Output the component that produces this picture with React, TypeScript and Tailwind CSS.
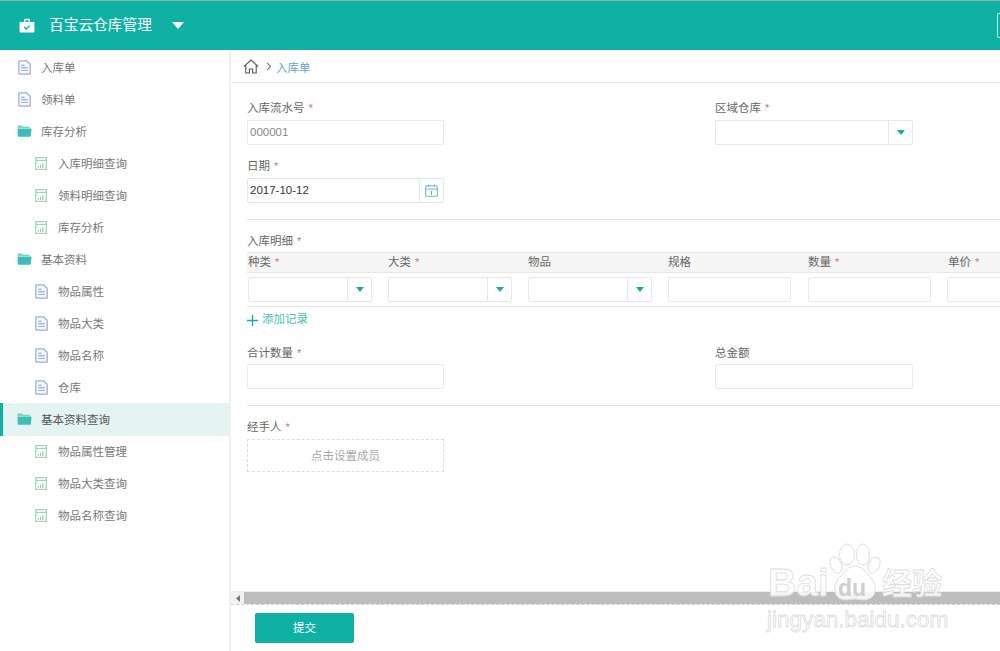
import React from "react";

const font = "font-['Liberation_Sans','Noto_Sans_CJK_SC',sans-serif]";

function DocIcon() {
  return (
    <svg width="13" height="15" viewBox="0 0 13 15" className="shrink-0">
      <path d="M1.5.8h7l3.7 3.5v9.2a.7.7 0 0 1-.7.7h-10a.7.7 0 0 1-.7-.7V1.5a.7.7 0 0 1 .7-.7z" fill="#f4f7fc" stroke="#9fb0dc" strokeWidth="1.3" />
      <path d="M3.2 5.2h3.4M3.2 7.8h6.6" stroke="#6fa3dc" strokeWidth="1.1" />
      <path d="M3.2 10.4h6.6" stroke="#9fb0dc" strokeWidth="1.1" />
    </svg>
  );
}

function FolderIcon() {
  return (
    <svg width="15" height="12" viewBox="0 0 15 12" className="shrink-0">
      <path d="M.5 1.2A.8.8 0 0 1 1.3.4h3.6l1.2 1.3h6a.8.8 0 0 1 .8.8v.6H.5z" fill="#7fcfc8" />
      <path d="M.5 3.4h13.2a.8.8 0 0 1 .8.9l-.7 6.8a.8.8 0 0 1-.8.7H1.6a.8.8 0 0 1-.8-.7z" fill="#3dbdb4" />
    </svg>
  );
}

function ChartIcon() {
  return (
    <svg width="12" height="13" viewBox="0 0 12 13" className="shrink-0">
      <rect x=".6" y=".6" width="10.8" height="11.8" fill="#fbfdfb" stroke="#a5d3b9" strokeWidth="1.2" />
      <path d="M.6 3.4h10.8" stroke="#a5d3b9" strokeWidth="1.2" />
      <path d="M3.4 11V9M5.6 11V7.4M7.8 11V6" stroke="#a9c9b8" strokeWidth="1.2" />
    </svg>
  );
}

function Caret() {
  return (
    <svg width="8" height="5" viewBox="0 0 8 5">
      <path d="M0 0h8L4 5z" fill="#10b0a4" />
    </svg>
  );
}

function Star() {
  return <span className="ml-1 text-[#e57373]">*</span>;
}

function Label({ text, star = true }: { text: string; star?: boolean }) {
  return (
    <div className="h-[18px] text-[11.5px] leading-[18px] text-[#666]">
      {text}
      {star && <Star />}
    </div>
  );
}

function SelectBox({ w }: { w: string }) {
  return (
    <div className={`flex h-[25px] shrink-0 rounded-[2px] border border-[#e6e6e6] bg-white ${w}`}>
      <div className="flex-1" />
      <div className="flex w-[24px] items-center justify-center border-l border-[#e6e6e6]">
        <Caret />
      </div>
    </div>
  );
}

function TextBox({ className = "", children }: { className?: string; children?: React.ReactNode }) {
  return (
    <div className={`flex h-[25px] shrink-0 items-center rounded-[2px] border border-[#e9e9e9] bg-white pl-[2px] text-[11.5px] ${className}`}>
      {children}
    </div>
  );
}

type Item = { label: string; kind: "doc" | "folder" | "chart"; sub?: boolean; active?: boolean };

const items: Item[] = [
  { label: "入库单", kind: "doc" },
  { label: "领料单", kind: "doc" },
  { label: "库存分析", kind: "folder" },
  { label: "入库明细查询", kind: "chart", sub: true },
  { label: "领料明细查询", kind: "chart", sub: true },
  { label: "库存分析", kind: "chart", sub: true },
  { label: "基本资料", kind: "folder" },
  { label: "物品属性", kind: "doc", sub: true },
  { label: "物品大类", kind: "doc", sub: true },
  { label: "物品名称", kind: "doc", sub: true },
  { label: "仓库", kind: "doc", sub: true },
  { label: "基本资料查询", kind: "folder", active: true },
  { label: "物品属性管理", kind: "chart", sub: true },
  { label: "物品大类查询", kind: "chart", sub: true },
  { label: "物品名称查询", kind: "chart", sub: true },
];

function SideRow({ item }: { item: Item }) {
  const Icon = item.kind === "doc" ? DocIcon : item.kind === "folder" ? FolderIcon : ChartIcon;
  return (
    <div
      className={`flex items-center text-[11.5px] ${item.sub ? "pl-[35px]" : "pl-[17px]"} ${
        item.active
          ? "-mt-px h-[33px] border-l-[3px] border-[#10b0a4] bg-[#e3f4f2] !pl-[14px] pt-[3px] text-[#555]"
          : "h-[32px] pt-[2px] text-[#777]"
      }`}
    >
      <span className={`-mt-[4px] flex shrink-0 ${item.sub ? "w-[23px]" : "w-[24px]"} ${item.kind === "doc" && !item.sub ? "pl-px" : ""}`}>
        <Icon />
      </span>
      {item.label}
    </div>
  );
}

function Watermark() {
  const outline = "[-webkit-text-stroke:0.8px_#dcdcdc] text-white/85";
  return (
    <div className="pointer-events-none absolute left-[762px] top-[542px] h-[90px] w-[190px]">
      <svg width="56" height="60" viewBox="0 0 56 60" className="absolute left-[64px] top-0">
        <g fill="#fff" fillOpacity=".85" stroke="#dedede" strokeWidth="1">
          <ellipse cx="10" cy="23" rx="5.5" ry="8.5" transform="rotate(-25 10 23)" />
          <ellipse cx="21" cy="12.5" rx="7.5" ry="10.5" />
          <ellipse cx="37" cy="12.5" rx="6.5" ry="10.5" />
          <ellipse cx="48" cy="23" rx="5.5" ry="8.5" transform="rotate(25 48 23)" />
          <path d="M29 24c7 0 10 6 15 11 7 6 9 23-7 23-3 0-5-1-8-1s-5 1-8 1c-16 0-14-17-7-23 5-5 8-11 15-11z" />
        </g>
      </svg>
      <div className={`absolute left-[6px] top-[21px] font-['Liberation_Sans',sans-serif] text-[39px] font-bold leading-[40px] ${outline}`}>
        Bai
      </div>
      <div className="absolute left-[76px] top-[34px] font-['Liberation_Sans',sans-serif] text-[23px] font-bold leading-[24px] text-[#cfcfcf]">
        du
      </div>
      <div className={`absolute left-[120px] top-[25px] whitespace-nowrap text-[30px] font-bold leading-[34px] ${outline}`}>经验</div>
      <div className={`absolute left-[5px] top-[66px] whitespace-nowrap font-['Liberation_Sans',sans-serif] text-[22.5px] leading-[24px] ${outline}`}>
        jingyan.baidu.com
      </div>
    </div>
  );
}

export default function App() {
  return (
    <div className={`relative flex h-[651px] w-[1000px] flex-col overflow-hidden bg-white ${font}`}>
      <header className="flex h-[50px] shrink-0 items-center border-t border-[#8fb5b1] bg-[#0fb1a5] pl-[19px] text-white">
        <svg width="16" height="15" viewBox="0 0 16 15">
          <path d="M5 4V2.2C5 1.3 5.6.8 6.4.8h3.2c.8 0 1.4.5 1.4 1.4V4h3.4c.6 0 1 .4 1 1v8.4c0 .6-.4 1-1 1H1.6c-.6 0-1-.4-1-1V5c0-.6.4-1 1-1z" fill="#fff" />
          <path d="M6.4 4V2.2h3.2V4z" fill="#0fb1a5" />
          <path d="M5.3 9l2 2 3.4-3.4" fill="none" stroke="#0fb1a5" strokeWidth="1.3" />
        </svg>
        <span className="ml-[14px] text-[14.7px]">百宝云仓库管理</span>
        <svg width="12" height="7" viewBox="0 0 12 7" className="ml-[20px]">
          <path d="M0 0h12L6 7z" fill="#fff" />
        </svg>
        <div className="ml-auto h-[25px] w-[3px] rounded-l-[2px] border border-r-0 border-[#bfe6e2]" />
      </header>

      <div className="flex min-h-0 flex-1">
        <aside className="w-[231px] shrink-0 border-r-2 border-[#f0f0f0] pt-[2px]">
          {items.map((it, i) => (
            <SideRow key={i} item={it} />
          ))}
        </aside>

        <main className="flex min-w-0 flex-1 flex-col">
          <div className="flex h-[33px] shrink-0 items-center border-b border-[#e8e8e8] pl-[12px] pt-[1px]">
            <svg width="16" height="15" viewBox="0 0 16 15">
              <path d="M.8 7.6L8 1l7.2 6.6M2.8 6v8h3.6v-4h3.2v4h3.6V6" fill="none" stroke="#555" strokeWidth="1.1" />
            </svg>
            <svg width="6" height="9" viewBox="0 0 6 9" className="ml-[7px]">
              <path d="M1 .8l3.6 3.7L1 8.2" fill="none" stroke="#777" strokeWidth="1.1" />
            </svg>
            <span className="ml-[4px] mt-[4px] text-[11.5px] text-[#5fa5d5]">入库单</span>
          </div>

          <div className="min-h-0 flex-1 overflow-hidden pl-[16px] pt-[16px]">
            <div className="flex">
              <div className="w-[468px]">
                <Label text="入库流水号" />
                <TextBox className="mt-[3px] w-[197px] text-[#888]">000001</TextBox>
              </div>
              <div>
                <Label text="区域仓库" />
                <SelectBox w="mt-[3px] w-[198px]" />
              </div>
            </div>
            <div className="mt-[12px]">
              <Label text="日期" />
              <div className="mt-[3px] flex h-[25px] w-[197px] items-center rounded-[2px] border border-[#e6e6e6] pl-[2px] text-[11.5px] text-[#333]">
                <span className="flex-1">2017-10-12</span>
                <div className="flex h-full w-[24px] items-center justify-center border-l border-[#e6e6e6]">
                  <svg width="13" height="13" viewBox="0 0 13 13">
                    <rect x=".7" y="1.8" width="11.6" height="10.5" rx="1" fill="none" stroke="#5cc9bd" strokeWidth="1.1" />
                    <path d="M.7 5h11.6M3.6.4v2.6M9.4.4v2.6" stroke="#5cc9bd" strokeWidth="1.1" />
                    <path d="M6.5 7v4" stroke="#8fa0a0" strokeWidth="1" />
                  </svg>
                </div>
              </div>
            </div>

            <div className="mt-[16px] h-px w-[753px] bg-[#e5e5e5]" />

            <div className="mt-[12px]">
              <Label text="入库明细" />
            </div>
            <div className="mt-[2px] w-[753px]">
              <div className="flex h-[21px] items-center border-y border-[#e8e8e8] bg-[#f5f5f5] pl-[1px] text-[11.5px] text-[#666]">
                {[
                  ["种类", true],
                  ["大类", true],
                  ["物品", false],
                  ["规格", false],
                  ["数量", true],
                  ["单价", true],
                ].map(([t, s], i) => (
                  <span key={i} className="w-[140px] shrink-0">
                    {t as string}
                    {s && <Star />}
                  </span>
                ))}
              </div>
              <div className="flex h-[34px] items-center gap-[16px] border-b border-[#e8e8e8] pl-[1px]">
                <SelectBox w="w-[124px]" />
                <SelectBox w="w-[124px]" />
                <SelectBox w="w-[124px]" />
                <TextBox className="w-[123px]" />
                <TextBox className="ml-px w-[123px]" />
                <TextBox className="w-[123px]" />
              </div>
            </div>

            <div className="mt-[4px] flex h-[18px] items-center text-[11.5px] text-[#45c0b5]">
              <svg width="11" height="11" viewBox="0 0 11 11">
                <path d="M5.5 0v11M0 5.5h11" stroke="#10b0a4" strokeWidth="1.3" />
              </svg>
              <span className="ml-[4px]">添加记录</span>
            </div>

            <div className="mt-[15px] flex">
              <div className="w-[468px]">
                <Label text="合计数量" />
                <TextBox className="mt-[2px] w-[197px]" />
              </div>
              <div>
                <Label text="总金额" star={false} />
                <TextBox className="mt-[2px] w-[198px]" />
              </div>
            </div>

            <div className="mt-[16px] h-px w-[753px] bg-[#e5e5e5]" />

            <div className="mt-[12px]">
              <Label text="经手人" />
            </div>
            <div className="mt-[3px] flex h-[33px] w-[197px] items-center justify-center border border-dashed border-[#dcdcdc] pt-[2px] text-[11.5px] text-[#a8a8a8]">
              点击设置成员
            </div>
          </div>

          <div className="flex h-[13px] shrink-0 border-t border-[#eeeeee] bg-[#f2f2f2]">
            <div className="flex w-[13px] shrink-0 items-center justify-center">
              <svg width="4" height="7" viewBox="0 0 4 7">
                <path d="M4 0v7L0 3.5z" fill="#777" />
              </svg>
            </div>
            <div className="flex-1 bg-[#bdbdbd]" />
          </div>
          <div className="h-[47px] shrink-0 border-t border-dashed border-[#cfcfcf] pl-[24px] pt-[8px]">
            <button className="h-[30px] w-[99px] rounded-[2px] bg-[#0fb1a5] pt-[2px] text-[11.5px] text-white">提交</button>
          </div>
        </main>
      </div>
      <Watermark />
    </div>
  );
}
